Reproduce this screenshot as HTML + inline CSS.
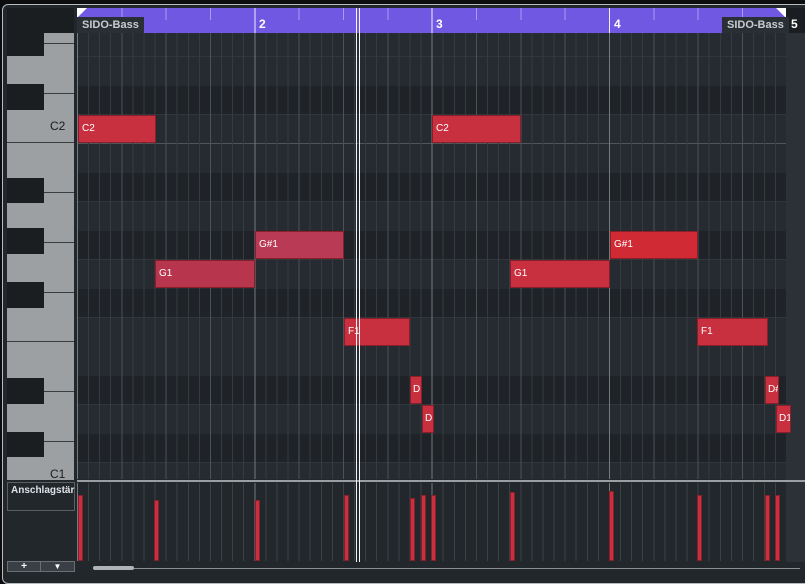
<!DOCTYPE html>
<html><head><meta charset="utf-8"><style>
*{margin:0;padding:0;box-sizing:border-box}
body{width:805px;height:578px;background:#0c0d0e;overflow:hidden;position:relative;font-family:"Liberation Sans",sans-serif}
.a{position:absolute}
.frame{left:2px;top:4px;width:810px;height:580px;border:1px solid #b8bcc0;border-radius:6px;background:#22272c}
.grid{left:77px;top:33px;width:709px;height:446px;overflow:hidden;background:#262b31}
.vl{position:absolute;left:0;top:0;width:709px;height:100%;
background:
repeating-linear-gradient(90deg,#737a80 0 1px,transparent 1px 177.33px),
repeating-linear-gradient(90deg,#4b5258 0 1px,transparent 1px 44.33px),
repeating-linear-gradient(90deg,#353b41 0 1px,transparent 1px 11.083px);}
.row{position:absolute;left:0;width:709px;height:29px;border-bottom:1px solid #30363c}
.bk{background:#1f2328}
.n{position:absolute;background:#c83040;border:1px solid #8a1f2a;color:#fff;font-size:10px;line-height:26px;padding-left:3px;overflow:hidden;white-space:nowrap;height:28px}
.vel{position:absolute;background:#c83040;border:1px solid #8a1f2a;width:5px;bottom:0}
.key{position:absolute;left:7px;width:37px;background:#1b1e21}
.sep{position:absolute;left:44px;width:30px;height:1px;background:#3a3d40}
.tag{position:absolute;top:17px;height:16px;background:#2a2f35;color:#c8ccd0;font-weight:bold;font-size:11px;line-height:16px;padding:0 5px}
.rl{position:absolute;font-weight:bold;color:#fff;font-size:12px;top:17px}
</style></head><body>
<div class="a frame"></div>
<div class="a" style="left:7px;top:8px;width:67px;height:25px;background:#1b1e21"></div>
<div class="a" style="left:77px;top:8px;width:709px;height:25px;background:#7158e2;
background-image:repeating-linear-gradient(90deg,#f0f0ff 0 1px,transparent 1px 177.33px),repeating-linear-gradient(90deg,#a89cf2 0 1px,transparent 1px 44.33px);background-size:709px 25px,709px 12px;background-repeat:no-repeat"></div>
<div class="a" style="left:77px;top:8px;width:0;height:0;border-top:10px solid #fff;border-right:10px solid transparent"></div>
<div class="a" style="left:776px;top:8px;width:0;height:0;border-top:10px solid #fff;border-left:10px solid transparent"></div>
<div class="a" style="left:786px;top:8px;width:19px;height:25px;background:#1a1d21"></div>
<div class="rl" style="left:259px">2</div><div class="rl" style="left:436px">3</div><div class="rl" style="left:614px">4</div><div class="rl" style="left:791px">5</div>
<div class="tag" style="left:77px">SIDO-Bass</div>
<div class="tag" style="left:722px">SIDO-Bass</div>

<div class="a grid">
<div class="row" style="top:-5px;" ></div>
<div class="row bk" style="top:53px"></div>
<div class="row bk" style="top:140px"></div>
<div class="row bk" style="top:198px"></div>
<div class="row bk" style="top:256px"></div>
<div class="row bk" style="top:343px"></div>
<div class="row bk" style="top:401px"></div>
<div class="a" style="left:0;top:110px;width:709px;height:1px;background:#4e555b"></div>
<div class="vl"></div>
</div>
<div class="a" style="left:786px;top:33px;width:19px;height:529px;background:#2c3137"></div>

<div class="n" style="left:78px;top:115px;width:78px">C2</div>
<div class="n" style="left:432px;top:115px;width:89px">C2</div>
<div class="n" style="left:255px;top:231px;width:89px;background:#b83a55">G#1</div>
<div class="n" style="left:155px;top:260px;width:100px;background:#b8354e">G1</div>
<div class="n" style="left:510px;top:260px;width:100px">G1</div>
<div class="n" style="left:610px;top:231px;width:88px;background:#d02a35">G#1</div>
<div class="n" style="left:344px;top:318px;width:66px">F1</div>
<div class="n" style="left:697px;top:318px;width:71px">F1</div>
<div class="n" style="left:410px;top:376px;width:12px;padding-left:2px">D</div>
<div class="n" style="left:765px;top:376px;width:14px;padding-left:2px">D#</div>
<div class="n" style="left:422px;top:405px;width:12px;padding-left:2px">D</div>
<div class="n" style="left:776px;top:405px;width:15px;padding-left:2px">D1</div>

<!-- keyboard -->
<div class="a" style="left:7px;top:33px;width:67px;height:447px;background:#9da0a3"></div>
<div class="key" style="top:33px;height:23px"></div>
<div class="key" style="top:84px;height:26px"></div>
<div class="key" style="top:178px;height:25px"></div>
<div class="key" style="top:228px;height:26px"></div>
<div class="key" style="top:282px;height:26px"></div>
<div class="key" style="top:378px;height:26px"></div>
<div class="key" style="top:432px;height:25px"></div>
<div class="sep" style="top:43px"></div><div class="sep" style="top:93px"></div>
<div class="sep" style="top:142px;left:7px;width:67px"></div><div class="sep" style="top:192px"></div>
<div class="sep" style="top:242px"></div><div class="sep" style="top:292px"></div>
<div class="sep" style="top:341px;left:7px;width:67px"></div><div class="sep" style="top:391px"></div>
<div class="sep" style="top:441px"></div>
<div class="a" style="left:50px;top:119px;font-size:12px;color:#1a1c1e">C2</div>
<div class="a" style="left:50px;top:467px;font-size:12px;color:#1a1c1e">C1</div>

<div class="a" style="left:77px;top:480px;width:728px;height:2px;background:#9a9fa3"></div>
<!-- velocity lane -->
<div class="a" style="left:77px;top:483px;width:709px;height:78px;background:#22272c">
<div class="vl" style="background:repeating-linear-gradient(90deg,#737a80 0 1px,transparent 1px 177.33px),repeating-linear-gradient(90deg,#3a4046 0 1px,transparent 1px 11.083px)"></div>
<div class="vel" style="left:1px;height:66px"></div>
<div class="vel" style="left:77px;height:61px"></div>
<div class="vel" style="left:178px;height:61px"></div>
<div class="vel" style="left:267px;height:66px"></div>
<div class="vel" style="left:333px;height:63px"></div>
<div class="vel" style="left:344px;height:66px"></div>
<div class="vel" style="left:354px;height:66px"></div>
<div class="vel" style="left:433px;height:69px"></div>
<div class="vel" style="left:532px;height:70px"></div>
<div class="vel" style="left:620px;height:66px"></div>
<div class="vel" style="left:688px;height:66px"></div>
<div class="vel" style="left:698px;height:66px"></div>
</div>
<div class="a" style="left:356px;top:8px;width:1px;height:554px;background:#f4f4f4"></div>
<div class="a" style="left:359px;top:8px;width:1px;height:554px;background:#f4f4f4"></div>
<div class="a" style="left:7px;top:482px;width:68px;height:29px;border:1px solid #5a5f64;color:#dfe3e8;font-weight:bold;font-size:10px;padding:2px 3px">Anschlagstär</div>
<div class="a" style="left:7px;top:561px;width:68px;height:11px;border:1px solid #6a6f74;background:#3a3f45;color:#fff;font-size:10px;line-height:9px;display:flex">
<div style="width:33px;text-align:center;border-right:1px solid #6a6f74;font-weight:bold">+</div><div style="flex:1;text-align:center;font-size:8px">▼</div></div>
<div class="a" style="left:93px;top:568px;width:707px;height:1px;background:#8a8f94"></div>
<div class="a" style="left:93px;top:566px;width:41px;height:4px;border-radius:2px;background:#b0b4b8"></div>
</body></html>
